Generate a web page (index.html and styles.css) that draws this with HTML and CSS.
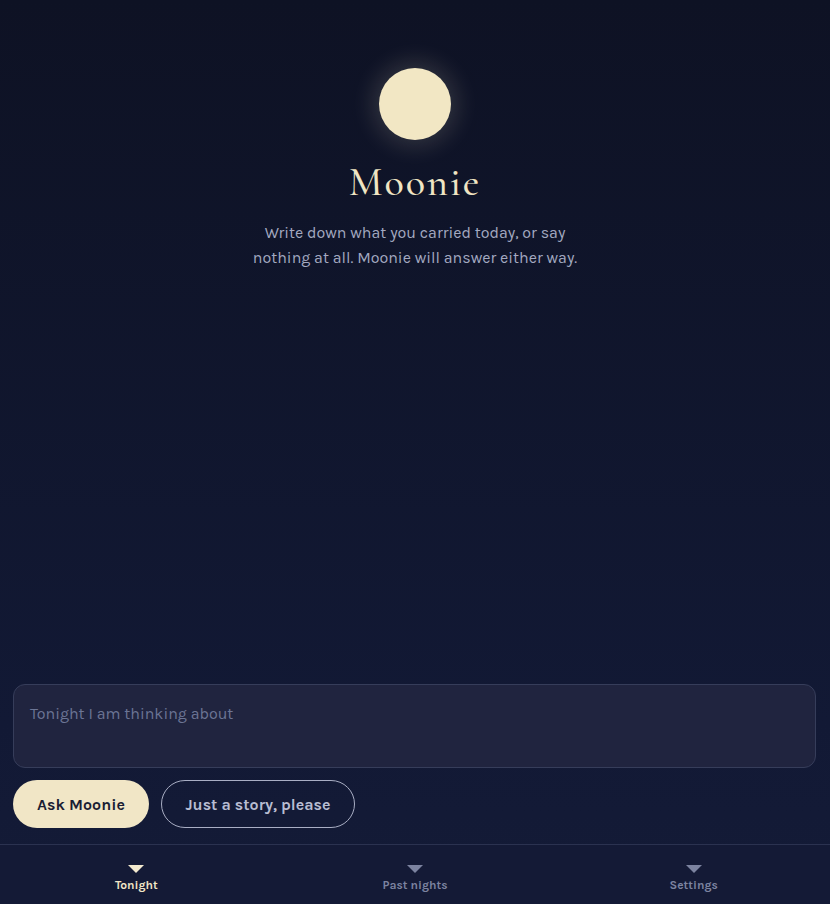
FILE: index.html
```html
<!DOCTYPE html>
<html lang="en">
<head>
<meta charset="utf-8">
<title>Moonie</title>
<link rel="stylesheet" href="styles.css">
</head>
<body>
<div class="app">
  <header class="hero">
    <div class="moon"></div>
    <h1 class="title">Moonie</h1>
    <p class="lede">Write down what you carried today, or say<br>nothing at all. Moonie will answer either way.</p>
  </header>
  <div class="spacer"></div>
  <section class="composer">
    <textarea class="entry" placeholder="Tonight I am thinking about"></textarea>
    <div class="actions">
      <button class="btn btn-primary">Ask Moonie</button>
      <button class="btn btn-ghost">Just a story, please</button>
    </div>
  </section>
  <nav class="tabs">
    <a class="tab active"><span class="tri"></span><span class="label">Tonight</span></a>
    <a class="tab"><span class="tri"></span><span class="label">Past nights</span></a>
    <a class="tab"><span class="tri"></span><span class="label">Settings</span></a>
  </nav>
</div>
</body>
</html>
```
FILE: styles.css
```css
* { box-sizing: border-box; }
html, body { margin: 0; padding: 0; height: 100%; }
body {
  background: linear-gradient(180deg, #0e1224 0%, #121935 80%, #141b37 100%);
  font-family: "Karla", "Lato", "Inter", sans-serif;
  color: #a9afc6;
}
.app {
  display: flex;
  flex-direction: column;
  height: 100vh;
}
.hero {
  display: flex;
  flex-direction: column;
  align-items: center;
  padding-top: 68px;
}
.moon {
  width: 72px;
  height: 72px;
  border-radius: 50%;
  background: #f2e7c4;
  box-shadow: 0 0 24px 6px rgba(242, 231, 196, 0.16);
}
.title {
  margin: 20px 0 0;
  font-family: "Cormorant Garamond", "EB Garamond", "Liberation Serif", serif;
  font-weight: 500;
  font-size: 40px;
  line-height: 44px;
  letter-spacing: 2px;
  color: #f0e5c3;
}
.lede {
  margin: 16px 0 0;
  text-align: center;
  font-size: 16px;
  line-height: 25px;
  color: #a3a9c0;
}
.spacer { flex: 1; }
.composer {
  padding: 0 14px 16px 13px;
  display: flex;
  flex-direction: column;
  gap: 12px;
}
.entry {
  display: block;
  width: 100%;
  height: 84px;
  resize: none;
  border: 1px solid #363d5a;
  border-radius: 12px;
  background: #20243f;
  padding: 19px 16px;
  font-family: inherit;
  font-size: 16px;
  line-height: 20px;
  color: #d0d4e2;
  outline: none;
}
.entry::placeholder { color: #6c7595; }
.actions {
  display: flex;
  gap: 12px;
}
.btn {
  height: 48px;
  border-radius: 24px;
  font-family: inherit;
  font-weight: 700;
  font-size: 16px;
  padding: 0 20px;
  cursor: pointer;
}
.btn-primary {
  width: 136px;
  background: #f1e6c6;
  border: none;
  color: #1a1d33;
}
.btn-ghost {
  width: 194px;
  background: transparent;
  border: 1px solid #a9aec4;
  color: #b8bdd2;
}
.tabs {
  display: grid;
  grid-template-columns: 1fr 1fr 1fr;
  gap: 6px;
  height: 60px;
  border-top: 1px solid #2b3250;
  background: #141a36;
}
.tab {
  display: flex;
  flex-direction: column;
  align-items: center;
  padding-top: 20px;
  color: #7c83a0;
  font-size: 12px;
  font-weight: 700;
}
.tri {
  width: 0;
  height: 0;
  border-left: 8px solid transparent;
  border-right: 8px solid transparent;
  border-top: 8px solid #7c83a0;
}
.label { margin-top: 5px; line-height: 15px; }
.tab.active { color: #f1e6c6; }
.tab.active .tri { border-top-color: #f4ead0; }
```
